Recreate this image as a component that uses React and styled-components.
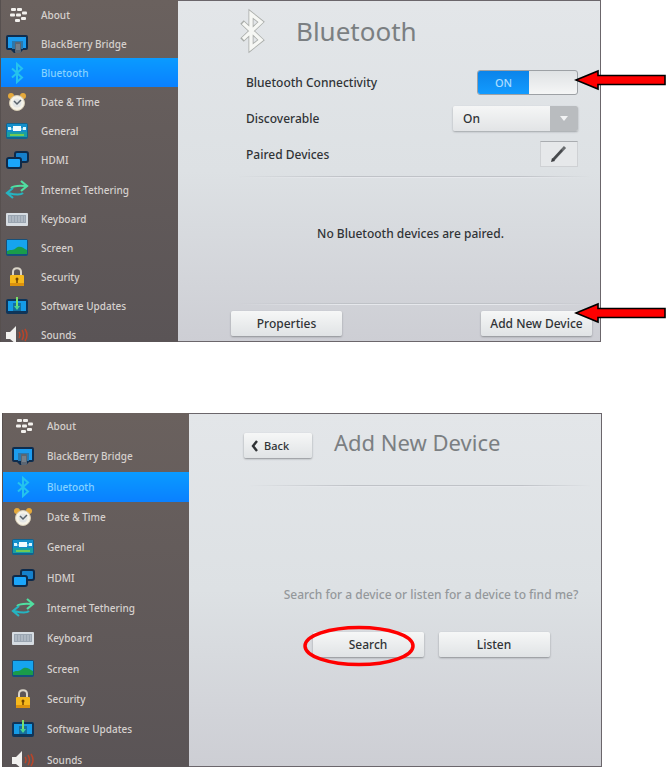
import * as React from "react";
import { useState } from "react";
import styled, { createGlobalStyle } from "styled-components";

const GlobalStyle = createGlobalStyle`
  * {
    box-sizing: border-box;
  }
  body {
    margin: 0;
    background: #fff;
    font-family: "Noto Sans", "Open Sans", sans-serif;
    font-size: 12px;
    color: #303336;
  }
  button, select {
    font: inherit;
    color: inherit;
  }
`;

const Page = styled.div`
  display: flex;
  flex-direction: column;
  gap: 71px;
  padding-right: 65px;
`;

const Panel = styled.section`
  display: flex;
  position: relative;
  height: ${(props) => (props.$large ? 354 : 342)}px;
  margin-left: ${(props) => (props.$large ? 2 : 0)}px;
  margin-right: ${(props) => (props.$large ? -1 : 0)}px;
`;

const Sidebar = styled.nav`
  flex: none;
  width: ${(props) => (props.$large ? 187 : 178)}px;
  overflow: hidden;
  background: linear-gradient(#6a615e, #5a5456);
  border-left: 1px solid #57504f;
`;

const MenuList = styled.ul`
  display: grid;
  grid-template-rows: repeat(12, 1fr);
  height: ${(props) => (props.$large ? 364 : 350)}px;
  margin: ${(props) => (props.$large ? -2 : 0)}px 0 0;
  padding: 0;
  list-style: none;
`;

const MenuLink = styled.a`
  display: flex;
  align-items: center;
  gap: 12px;
  height: 100%;
  padding-left: ${(props) => (props.$large ? 8 : 4)}px;
  font-size: 10px;
  font-weight: 500;
  text-decoration: none;
  color: ${(props) => (props.$active ? "#86d2ff" : "#d6d1ce")};
  background: ${(props) =>
    props.$active ? "linear-gradient(#0a9bff, #0a80ff)" : "none"};

  svg {
    flex: none;
  }
`;

const Main = styled.main`
  display: flex;
  flex: 1;
  flex-direction: column;
  min-width: 0;
  border: 1px solid #6b666b;
  border-left: 0;
  background: linear-gradient(#e3e6e9, #dde1e4 50%, #cdced4);
`;

const Header = styled.header`
  display: flex;
  align-items: center;
  gap: 30px;
  height: 60px;
  padding-left: 61px;
`;

const Title = styled.h1`
  margin: 0;
  font-size: 26px;
  font-weight: 400;
  line-height: 32px;
  color: #7b7f82;
`;

const Settings = styled.div`
  padding: 3px 22px 4px 68px;
  font-weight: 500;
`;

const SettingRow = styled.div`
  display: flex;
  align-items: center;
  justify-content: space-between;
  height: 36px;
`;

const Divider = styled.hr`
  width: auto;
  height: 2px;
  margin: 0 10px 0 60px;
  border: 0;
  background: linear-gradient(#bfc2c7 50%, #e6e8ec 50%);
  mask-image: linear-gradient(90deg, transparent, #000 30%, #000 80%, transparent);
`;

const Toggle = styled.span`
  display: flex;
  position: relative;
  width: 101px;
  height: 25px;
  border: 1px solid #9da1a5;
  border-radius: 3px;
  overflow: hidden;
  background: linear-gradient(#dfe2e4, #f5f6f6);

  input {
    position: absolute;
    inset: 0;
    width: 100%;
    height: 100%;
    margin: 0;
    opacity: 0;
  }
`;

const ToggleState = styled.span`
  display: flex;
  align-items: center;
  justify-content: center;
  width: 51px;
  order: ${(props) => (props.$on ? 0 : 1)};
  font-size: 11px;
  color: ${(props) => (props.$on ? "#a9dcff" : "#777")};
  background: ${(props) =>
    props.$on ? "linear-gradient(#0b84ea, #129bff)" : "#d5d8da"};
`;

const SelectBox = styled.span`
  display: grid;
  grid-template-columns: 1fr 28px;
  width: 125px;
  height: 25px;
  border-radius: 2px;
  background: linear-gradient(#f5f6f6, #e2e4e6);
  box-shadow: 0 1px 2px #a0a4a8;

  select {
    grid-area: 1 / 1 / 2 / 3;
    appearance: none;
    border: 0;
    padding: 0 10px;
    background: none;
  }
`;

const SelectArrow = styled.span`
  grid-area: 1 / 2;
  display: flex;
  align-items: center;
  justify-content: center;
  border-radius: 0 2px 2px 0;
  background: #b9bcbf;
  pointer-events: none;
`;

const EditButton = styled.button`
  display: flex;
  align-items: center;
  justify-content: center;
  width: 38px;
  height: 26px;
  padding: 0;
  border: 1px solid #cfd1d4;
  border-top-color: #a9acb0;
  background: #e6e8ea;
`;

const Message = styled.p`
  display: flex;
  flex: 1;
  align-items: center;
  justify-content: center;
  margin: 0;
  padding: 0 0 14px 43px;
  font-weight: 500;
`;

const Footer = styled.footer`
  display: flex;
  justify-content: space-between;
  padding: 6px 8px 5px 53px;
`;

const Button = styled.button`
  display: flex;
  align-items: center;
  justify-content: ${(props) => (props.$back ? "flex-start" : "center")};
  gap: 5px;
  width: ${(props) => (props.$back ? 68 : 111)}px;
  height: 25px;
  padding: 0 ${(props) => (props.$back ? 7 : 0)}px;
  border: 0;
  border-radius: 2px;
  font-size: ${(props) => (props.$back ? 11 : 12)}px;
  font-weight: 500;
  white-space: nowrap;
  background: linear-gradient(#f6f7f7, #e0e3e5);
  box-shadow: 0 1px 2px #8d9094;
`;

const AddHeader = styled.header`
  display: flex;
  align-items: center;
  gap: 22px;
  height: 71px;
  padding: 0 0 8px 55px;
`;

const AddTitle = styled(Title)`
  font-size: 22px;
  padding-bottom: 8px;
`;

const Prompt = styled.div`
  display: flex;
  flex: 1;
  flex-direction: column;
  align-items: center;
  gap: 28px;
  padding: 99px 22px 0 94px;
  line-height: 18px;
  color: #94989b;

  p {
    margin: 0;
    white-space: nowrap;
    font-weight: 500;
  }
`;

const Choices = styled.div`
  display: flex;
  gap: 15px;
  color: #303336;
`;

const Highlighted = styled.div`
  position: relative;

  svg {
    position: absolute;
    top: -7px;
    left: -10px;
    pointer-events: none;
  }
`;

const Pointer = styled.svg`
  position: absolute;
  right: -65px;
  top: ${(props) => props.$top}px;
  pointer-events: none;
`;

const icons = {
  about: (
    <g fill="#f3f1ee">
      <rect x="6" y="5" width="5" height="3" rx="1" />
      <rect x="12" y="5" width="5" height="3" rx="1" />
      <rect x="17" y="8.500" width="5" height="3" rx="1" />
      <rect x="5" y="10.500" width="5" height="3" rx="1" />
      <rect x="11" y="10.500" width="5" height="3" rx="1" />
      <rect x="16" y="14" width="5" height="3" rx="1" />
      <rect x="10" y="16" width="5" height="3" rx="1" />
    </g>
  ),
  bridge: (
    <g>
      <path d="M1 5q0-2 2-2h18q2 0 2 2v11q0 2-2 2h-3l-3 3h-6l-3-3H3q-2 0-2-2z" fill="#0e2d4f" />
      <path d="M3 5h18v11h-3V9H7v7H3z" fill="#1c9df0" />
      <path d="M7 9h11v8H7z" fill="#2b78ad" />
      <rect x="10" y="10" width="6" height="11" rx="1" fill="#5c6672" />
      <path d="M11 13h4M11 15h4M11 17h4" stroke="#8f989f" />
    </g>
  ),
  bluetooth: (
    <path
      d="M7 7.500L17 16.500L12 21V3L17 7.500L7 16.500"
      fill="none"
      stroke="#25c3ee"
      strokeWidth="2"
    />
  ),
  clock: (
    <g>
      <circle cx="6" cy="6" r="3" fill="#e5a93b" />
      <circle cx="18" cy="6" r="3" fill="#e5a93b" />
      <circle cx="12" cy="13" r="7.500" fill="#f6f3e8" stroke="#d5cbb4" />
      <circle cx="12" cy="13" r="4.500" fill="#e3e6e6" />
      <path d="M9 11l3 3 4-4" fill="none" stroke="#59636c" strokeWidth="1.5" />
    </g>
  ),
  general: (
    <g>
      <rect x="1" y="4" width="22" height="16" rx="2" fill="#12648f" />
      <rect x="2" y="5" width="20" height="9" fill="#138fcb" />
      <rect x="3" y="8" width="3" height="3" fill="#d9f6ff" />
      <rect x="18" y="8" width="3" height="3" fill="#d9f6ff" />
      <path d="M6 10h12" stroke="#9fdcf5" strokeWidth="1" />
      <rect x="8" y="7" width="8" height="5" fill="#f2fcff" />
      <path d="M2 13h20v5H2z" fill="#19a0a4" />
      <path d="M5 16h14" stroke="#6fca55" strokeWidth="2" />
    </g>
  ),
  hdmi: (
    <g stroke="#0e2a4a" strokeWidth="2">
      <rect x="10" y="4" width="13" height="10" rx="2" fill="#1580cc" />
      <rect x="2" y="10" width="14" height="10" rx="2" fill="#1ba6fb" />
    </g>
  ),
  tethering: (
    <g fill="none" strokeWidth="2.200">
      <path d="M6 10q3-3 15-2M16 3l6 5-6 5" stroke="#50e0a1" />
      <path d="M18 15q-3 3-15 0M8 10l-6 5 6 5" stroke="#25b4c1" />
    </g>
  ),
  keyboard: (
    <g>
      <rect x="1" y="6" width="22" height="13" rx="1" fill="#d6dce2" />
      <rect x="3" y="8" width="18" height="8" fill="#9aa5b1" />
      <path
        d="M4 10h16M4 12h16M4 14h16"
        stroke="#c3cbd4"
        strokeDasharray="2 1"
      />
    </g>
  ),
  screen: (
    <g>
      <rect x="1" y="3" width="22" height="17" rx="2" fill="#15517c" />
      <rect x="2" y="4" width="20" height="14" fill="#16a4ee" />
      <path d="M2 15c4-2 6 0 9-3 4-3 7 0 11 2v4H2z" fill="#1a9c4a" />
    </g>
  ),
  security: (
    <g>
      <path d="M8 11V7c0-5 8-5 8 0v4" fill="none" stroke="#dad4c8" strokeWidth="2" />
      <rect x="5" y="10" width="14" height="11" rx="1" fill="#f6b91c" />
      <path d="M5 18h14v2q0 1-1 1H6q-1 0-1-1z" fill="#dc920e" />
      <circle cx="12" cy="14" r="1.5" fill="#704400" />
      <path d="M12 14v4" stroke="#704400" strokeWidth="1.5" />
    </g>
  ),
  updates: (
    <g>
      <rect x="1" y="5" width="22" height="15" rx="2" fill="#0f3559" />
      <rect x="3" y="7" width="18" height="10" fill="#159be6" />
      <path d="M8 9h8v8H8z" fill="#156f9f" />
      <path d="M12 3v12" stroke="#7be06a" strokeWidth="2" />
      <path d="M9 12h6l-3 4z" fill="#4bd490" />
    </g>
  ),
  sounds: (
    <g>
      <path d="M1 9h4l6-6v18l-6-5H1z" fill="#f1f0ee" />
      <path
        d="M14 9q2 3 0 6M17 7q3 5 0 10M20 6q4 6 0 12"
        fill="none"
        stroke="#b8452a"
        strokeWidth="1.5"
      />
    </g>
  ),
};

const menuItems = [
  { icon: "about", label: "About" },
  { icon: "bridge", label: "BlackBerry Bridge" },
  { icon: "bluetooth", label: "Bluetooth" },
  { icon: "clock", label: "Date & Time" },
  { icon: "general", label: "General" },
  { icon: "hdmi", label: "HDMI" },
  { icon: "tethering", label: "Internet Tethering" },
  { icon: "keyboard", label: "Keyboard" },
  { icon: "screen", label: "Screen" },
  { icon: "security", label: "Security" },
  { icon: "updates", label: "Software Updates" },
  { icon: "sounds", label: "Sounds" },
];

const Menu = ({ large }) => (
  <Sidebar $large={large}>
    <MenuList $large={large}>
      {menuItems.map((item) => (
        <li key={item.icon}>
          <MenuLink
            href={"#" + item.icon}
            $large={large}
            $active={item.icon === "bluetooth"}
          >
            <svg width="24" height="24" viewBox="0 0 24 24" aria-hidden="true">
              {icons[item.icon]}
            </svg>
            {item.label}
          </MenuLink>
        </li>
      ))}
    </MenuList>
  </Sidebar>
);

const RedArrow = ({ top }) => (
  <Pointer $top={top} width="92" height="22" viewBox="0 0 92 22" aria-hidden="true">
    <path
      d="M2 11L24 2V6.500H91V15.500H24V20Z"
      fill="#f00"
      stroke="#000"
      strokeWidth="1.6"
    />
  </Pointer>
);

const BluetoothPanel = () => {
  const [enabled, setEnabled] = useState(true);

  return (
    <Panel>
      <Menu />
      <Main>
        <Header>
          <svg width="27" height="46" viewBox="0 0 27 46" aria-hidden="true">
            <g fill="none" strokeLinejoin="miter">
              <path d="M3 14L22 32L12 40V6L22 14L3 32" stroke="#a9aca9" strokeWidth="5" />
              <path d="M4 15L22 32L12 40V6L22 14L4 31" stroke="#f6f7f4" strokeWidth="3.400" />
            </g>
          </svg>
          <Title>Bluetooth</Title>
        </Header>
        <Settings>
          <SettingRow>
            <label htmlFor="connectivity">Bluetooth Connectivity</label>
            <Toggle>
              <ToggleState $on={enabled}>{enabled ? "ON" : "OFF"}</ToggleState>
              <input
                id="connectivity"
                type="checkbox"
                checked={enabled}
                onChange={(e) => setEnabled(e.target.checked)}
              />
            </Toggle>
          </SettingRow>
          <SettingRow>
            <label htmlFor="discoverable">Discoverable</label>
            <SelectBox>
              <select id="discoverable" defaultValue="On">
                <option>On</option>
                <option>Off</option>
              </select>
              <SelectArrow>
                <svg width="8" height="5" viewBox="0 0 8 5" aria-hidden="true">
                  <path d="M0 0h8L4 5z" fill="#f2f3f4" />
                </svg>
              </SelectArrow>
            </SelectBox>
          </SettingRow>
          <SettingRow>
            <span id="paired">Paired Devices</span>
            <EditButton aria-labelledby="paired">
              <svg width="20" height="20" viewBox="0 0 20 20" aria-hidden="true">
                <path d="M4 16L16 3" stroke="#6a6d70" strokeWidth="3" />
                <path d="M4 16L13 6" stroke="#46494c" strokeWidth="2" />
                <path d="M2 18l1-4 3 3z" fill="#3b3d40" />
              </svg>
            </EditButton>
          </SettingRow>
        </Settings>
        <Divider />
        <Message>No Bluetooth devices are paired.</Message>
        <Divider />
        <Footer>
          <Button>Properties</Button>
          <Button>Add New Device</Button>
        </Footer>
      </Main>
      <RedArrow top={69} />
      <RedArrow top={302} />
    </Panel>
  );
};

const AddDevicePanel = () => (
  <Panel $large>
    <Menu large />
    <Main>
      <AddHeader>
        <Button $back>
          <svg width="8" height="12" viewBox="0 0 8 12" aria-hidden="true">
            <path d="M6 1L2 6l4 5" fill="none" stroke="#2f3235" strokeWidth="2.400" />
          </svg>
          Back
        </Button>
        <AddTitle as="h2">Add New Device</AddTitle>
      </AddHeader>
      <Divider />
      <Prompt>
        <p>Search for a device or listen for a device to find me?</p>
        <Choices>
          <Highlighted>
            <Button>Search</Button>
            <svg width="113" height="42" viewBox="0 0 113 42" aria-hidden="true">
              <ellipse
                cx="56"
                cy="21"
                rx="54"
                ry="18.500"
                fill="none"
                stroke="#f00"
                strokeWidth="3.500"
              />
            </svg>
          </Highlighted>
          <Button>Listen</Button>
        </Choices>
      </Prompt>
    </Main>
  </Panel>
);

export default function App() {
  return (
    <>
      <GlobalStyle />
      <Page>
        <BluetoothPanel />
        <AddDevicePanel />
      </Page>
    </>
  );
}
